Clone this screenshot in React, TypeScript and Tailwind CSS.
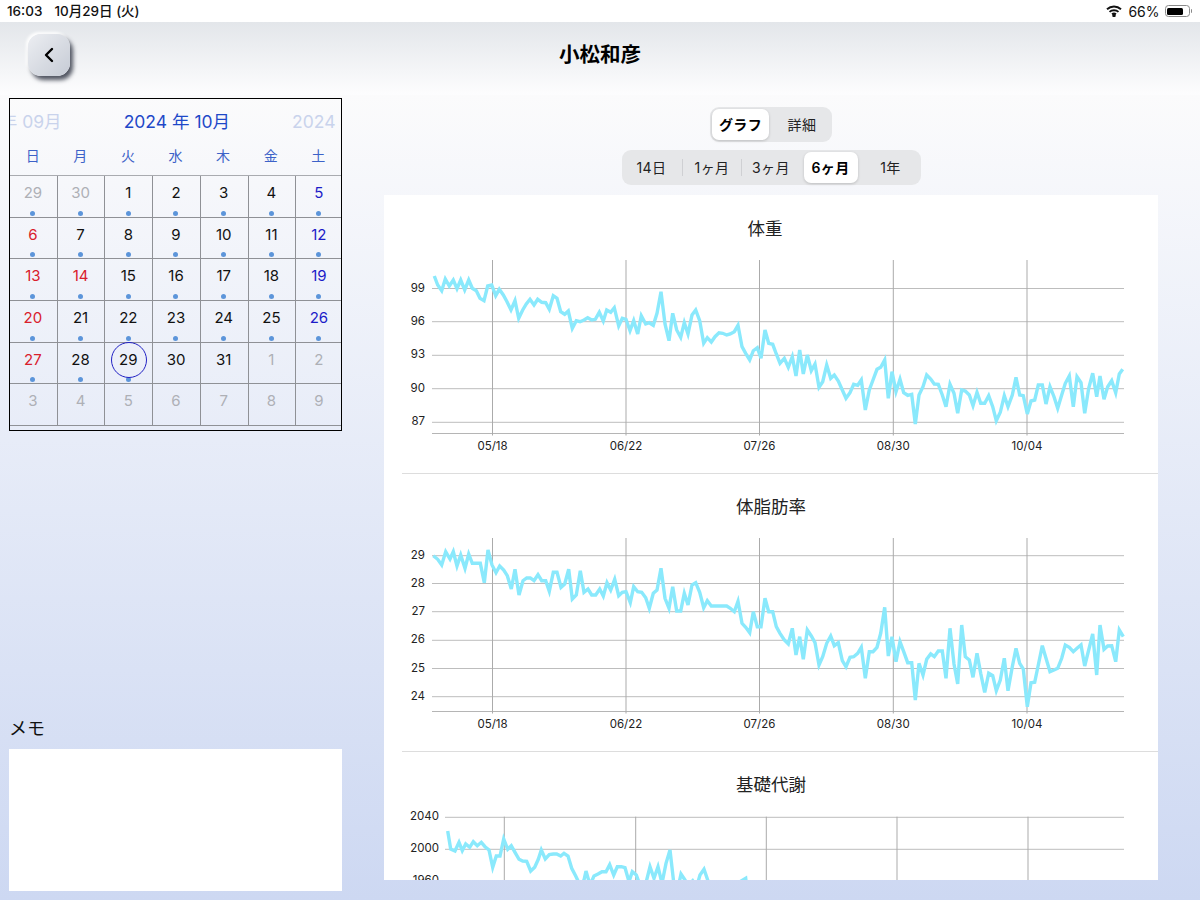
import { ChevronLeft } from 'lucide-react';

const FONT = 'font-["Inter","Noto_Sans_CJK_JP",sans-serif]';
const SVG_FONT = 'Inter, "Noto Sans CJK JP", sans-serif';

// line data, read off at 3x: [x, y] pairs relative to the crop origin
const weightA = [103,78,113,105,125,122,136,87,148,108,160,90,171,116,182,90,194,120,206,90,217,115,229,122,240,145,252,152,263,108,275,105,287,137,298,118,310,135,321,155,333,180,345,152,356,205,368,180,379,162,390,148,402,165,413,148,425,157,437,158,448,178,460,137,471,145,482,185,494,193,505,183,517,235,529,212,540,215,552,210,563,203,575,210,586,208,598,187,610,213,620,180,632,187,643,173,656,228,667,205,678,208,690,242,701,212,713,252,724,197,737,222,748,218,760,226,771,190,783,125,795,222,807,272,818,190,830,240,842,262,853,218,864,252,876,195,887,180,899,212,911,280,922,263,934,276,945,260,957,248,968,250,980,255,991,252,1003,245,1014,226,1026,290,1037,310,1049,330,1060,302,1072,293,1083,325,1095,240,1106,280,1118,283,1129,312];
const weightB = [0,340,13,325,25,352,37,320,48,378,59,300,70,372,82,315,94,362,105,342,117,412,128,395,140,345,152,385,163,375,175,393,187,420,198,445,210,428,221,403,233,406,244,390,256,480,268,420,279,390,291,358,302,352,314,330,325,445,336,365,348,425,360,388,371,428,383,436,395,433,406,522,417,435,429,410,440,375,452,387,463,402,475,403,487,435,498,470,510,403,522,430,533,490,545,420,556,423,568,435,579,467,591,427,602,460,614,460,626,437,638,470,649,512,661,487,673,437,684,470,697,435,708,382,719,435,730,437,742,492,753,453,764,450,775,405,787,405,798,462,810,410,822,440,833,475,845,435,856,400,868,378,880,470,891,380,903,398,914,490,926,415,938,370,950,440,960,378,972,448,983,410,995,392,1007,428,1018,372,1028,358];
const fatA = [100,77,113,88,125,105,137,65,150,87,160,65,171,108,182,75,195,115,206,72,217,100,229,100,241,100,253,158,264,60,276,105,288,128,299,108,311,120,322,137,334,177,345,118,357,195,369,152,380,144,391,144,402,152,414,134,425,152,437,152,448,184,460,127,471,127,483,172,494,162,506,118,517,207,529,195,541,122,552,187,564,177,575,195,587,195,599,177,610,198,621,158,632,180,644,148,656,197,667,187,678,185,691,218,701,170,713,185,725,187,737,203,748,235,760,190,771,180,783,115,795,205,807,235,818,170,830,243,842,243,853,190,864,225,876,165,887,158,899,187,911,233,922,212,934,228,945,228,957,228,968,228,980,228,991,235,1003,245,1014,214,1026,280,1037,292,1049,308,1060,245,1072,290,1083,290,1095,205,1106,245,1118,245,1129,290];
const fatB = [0,310,13,330,25,342,37,295,48,375,59,320,70,388,82,300,94,318,105,338,117,405,128,380,140,340,152,318,163,347,175,338,187,392,198,410,210,382,221,380,233,370,244,352,256,445,268,365,279,365,291,352,302,310,314,232,325,378,336,320,348,395,360,335,371,365,383,398,395,398,406,510,417,400,429,435,440,388,452,372,463,380,475,363,487,363,498,445,510,295,522,402,533,462,545,285,556,380,568,390,579,442,591,370,602,430,614,487,626,430,638,437,649,482,661,450,673,385,684,482,697,410,708,355,719,400,730,417,742,530,753,458,764,457,775,405,787,347,798,385,810,425,822,420,833,415,845,385,856,345,868,352,880,365,891,355,903,345,914,408,926,360,938,312,950,435,960,285,972,358,983,348,995,347,1007,395,1018,300,1030,320];
const metaA = [143,183,152,237,165,243,177,217,187,242,197,222,209,232,220,215,232,227,244,217,255,230,267,240,278,292,289,258,300,258,311,207,323,238,334,227,345,247,357,268,368,273,380,274,392,303,404,292,415,268,424,240,436,267,448,254,460,252,470,252,482,258,492,250,504,258,515,295,527,318,540,345,552,330,558,303,570,345,582,318,594,312,606,305,618,305,629,284,641,315,652,290,664,290,675,293,687,335,697,305,709,315,720,345,735,350,750,290,762,325,774,290,786,340,798,280,810,240,822,345,835,350,843,312,855,330,866,345,878,332,890,350,900,315,912,298,925,335,935,350,1020,335,1037,325,1040,350];

const toPage = (raw: number[], ox: number, oy: number) => {
  const out: string[] = [];
  for (let i = 0; i < raw.length; i += 2) {
    out.push(`${(ox + raw[i] / 3).toFixed(1)},${(oy + raw[i + 1] / 3).toFixed(1)}`);
  }
  return out;
};

const charts = [
  {
    title: '体重',
    titleClass: 'pr-[12px]',
    top: 195,
    left: 432,
    labelX: 425,
    gridY: [288.5, 321.7, 355.3, 388.7, 422.3],
    yLabels: ['99', '96', '93', '90', '87'],
    axisY: 433.5,
    vTop: 260,
    vX: [492.5, 626, 759.5, 893.3, 1027],
    xLabels: ['05/18', '06/22', '07/26', '08/30', '10/04'],
    points: [...toPage(weightA, 400, 250), ...toPage(weightB, 780, 250)],
  },
  {
    title: '体脂肪率',
    titleClass: '',
    top: 473,
    left: 432,
    labelX: 425,
    gridY: [555.7, 583.5, 611.7, 640.3, 668.5, 696.7],
    yLabels: ['29', '28', '27', '26', '25', '24'],
    axisY: 711.5,
    vTop: 538,
    vX: [492.5, 626, 759.5, 893.3, 1027],
    xLabels: ['05/18', '06/22', '07/26', '08/30', '10/04'],
    points: [...toPage(fatA, 400, 530), ...toPage(fatB, 780, 530)],
  },
  {
    title: '基礎代謝',
    titleClass: '',
    top: 751,
    left: 445,
    labelX: 439,
    gridY: [817.3, 849.3, 881.3],
    yLabels: ['2040', '2000', '1960'],
    axisY: 0,
    vTop: 816.7,
    vX: [504.3, 635.7, 766.3, 897, 1028],
    xLabels: [],
    points: toPage(metaA, 400, 770),
  },
];

type Tone = 'black' | 'red' | 'blue' | 'gray';
type Day = { n: number; tone: Tone; dot?: boolean };

const toneClass: Record<Tone, string> = {
  black: 'text-[#111]',
  red: 'text-[#d9202c]',
  blue: 'text-[#1c1cc8]',
  gray: 'text-[#aeb0b6]',
};

const weeks: Day[][] = [
  [{ n: 29, tone: 'gray', dot: true }, { n: 30, tone: 'gray', dot: true }, { n: 1, tone: 'black', dot: true }, { n: 2, tone: 'black', dot: true }, { n: 3, tone: 'black', dot: true }, { n: 4, tone: 'black', dot: true }, { n: 5, tone: 'blue', dot: true }],
  [{ n: 6, tone: 'red', dot: true }, { n: 7, tone: 'black', dot: true }, { n: 8, tone: 'black', dot: true }, { n: 9, tone: 'black', dot: true }, { n: 10, tone: 'black', dot: true }, { n: 11, tone: 'black', dot: true }, { n: 12, tone: 'blue', dot: true }],
  [{ n: 13, tone: 'red', dot: true }, { n: 14, tone: 'red', dot: true }, { n: 15, tone: 'black', dot: true }, { n: 16, tone: 'black', dot: true }, { n: 17, tone: 'black', dot: true }, { n: 18, tone: 'black', dot: true }, { n: 19, tone: 'blue', dot: true }],
  [{ n: 20, tone: 'red', dot: true }, { n: 21, tone: 'black', dot: true }, { n: 22, tone: 'black', dot: true }, { n: 23, tone: 'black', dot: true }, { n: 24, tone: 'black', dot: true }, { n: 25, tone: 'black', dot: true }, { n: 26, tone: 'blue', dot: true }],
  [{ n: 27, tone: 'red', dot: true }, { n: 28, tone: 'black', dot: true }, { n: 29, tone: 'black', dot: true }, { n: 30, tone: 'black' }, { n: 31, tone: 'black' }, { n: 1, tone: 'gray' }, { n: 2, tone: 'gray' }],
  [{ n: 3, tone: 'gray' }, { n: 4, tone: 'gray' }, { n: 5, tone: 'gray' }, { n: 6, tone: 'gray' }, { n: 7, tone: 'gray' }, { n: 8, tone: 'gray' }, { n: 9, tone: 'gray' }],
];

function StatusBar() {
  return (
    <div className="h-[22px] bg-white flex items-center justify-between pl-[7px] pr-[8px] text-[13.5px] font-medium text-[#111]">
      <div className="flex gap-[12px]">
        <span>16:03</span>
        <span>10月29日 (火)</span>
      </div>
      <div className="flex items-center gap-[5px]">
        <svg width="16" height="12" viewBox="0 0 16 12" fill="none" stroke="#111" strokeWidth="1.9">
          <path d="M1 4.3 C5 .6 11 .6 15 4.3" />
          <path d="M3.5 6.9 C6 4.7 10 4.7 12.5 6.9" />
          <path d="M6 9.3 C7.2 8.4 8.8 8.4 10 9.3" />
          <circle cx="8" cy="10.6" r="0.8" fill="#111" />
        </svg>
        <span className="text-[14px] font-normal pl-[1px]">66%</span>
        <div className="flex items-center">
          <div className="w-[25px] h-[12px] rounded-[3.5px] border border-[#8a8a8a] p-[1.5px]">
            <div className="h-full w-[16px] rounded-[1.5px] bg-black" />
          </div>
          <div className="w-[1.5px] h-[4px] rounded-r-sm bg-[#8a8a8a] ml-[1px]" />
        </div>
      </div>
    </div>
  );
}

function Header() {
  return (
    <div className="h-[73px] pb-[7px] bg-gradient-to-b from-[#e3e6ea] to-[#fdfdfe] flex items-center relative">
      <button className="ml-[28px] w-[42px] h-[42px] rounded-[13px] bg-gradient-to-br from-[#eceef2] to-[#c6cbd5] shadow-[3px_4px_4px_rgba(40,45,60,0.8),-2px_-2px_3px_rgba(255,255,255,0.95)] flex items-center justify-center text-black">
        <ChevronLeft size={24} strokeWidth={2.4} />
      </button>
      <h1 className="absolute inset-x-0 text-center text-[20.5px] font-bold text-black pointer-events-none">小松和彦</h1>
    </div>
  );
}

function Calendar() {
  return (
    <div className="h-[333px] border border-black overflow-hidden">
      <div className="h-[46px] pr-[5px] flex items-center justify-center gap-[62px] text-[17.5px] whitespace-nowrap">
        <span className="shrink-0 text-[#c9d3ec]">2024 年 09月</span>
        <span className="shrink-0 text-[#1e48c8]">2024 年 10月</span>
        <span className="shrink-0 text-[#c9d3ec]">2024 年 11月</span>
      </div>
      <div className="grid grid-cols-7 w-[333px] -ml-[1px] h-[30px] pb-[10px] items-center text-[14px] text-center text-[#3d62c8]">
        {['日', '月', '火', '水', '木', '金', '土'].map((w) => (
          <span key={w}>{w}</span>
        ))}
      </div>
      <div className="border-t border-[#a9abb0] w-[334px]">
        {weeks.map((week, i) => (
          <div key={i} className="grid grid-cols-7 h-[41.67px] border-b border-[#8f9196]">
            {week.map((d, j) => (
              <div key={j} className={`relative flex justify-center pt-[6px] text-[15px] leading-[22px] ${j < 6 ? 'border-r border-[#8f9196] pr-[1px]' : 'pr-[2.5px]'} ${toneClass[d.tone]}`}>
                {d.n}
                {d.dot && <span className={`absolute bottom-[1px] w-[5px] h-[5px] rounded-full bg-[#5c95da] ${j < 6 ? 'left-[calc(50%-3px)]' : 'left-[calc(50%-3.7px)]'}`} />}
                {i === 4 && j === 2 && <span className="absolute -top-[1px] left-1/2 -ml-[18px] w-[36px] h-[36px] rounded-full border border-[#2222c4]" />}
              </div>
            ))}
          </div>
        ))}
      </div>
    </div>
  );
}

type Segment = { label: string; nudge?: string };

function Segments({ items, active, pill }: { items: Segment[]; active: number; pill: string }) {
  return (
    <div className="flex h-[35px] rounded-[9px] bg-[#e6e7e9] p-[2px] text-[14px] tracking-[0.4px] text-[#222]">
      {items.map((s, i) => (
        <div key={s.label} className="relative w-[59px] flex items-center justify-center">
          {i === active ? (
            <span className={`h-full flex items-center justify-center rounded-[7px] bg-white font-semibold text-black shadow-[0_1px_3px_rgba(0,0,0,0.18)] ${pill}`}>{s.label}</span>
          ) : (
            <span className={s.nudge}>{s.label}</span>
          )}
          {i < items.length - 1 && i !== active && i + 1 !== active && (
            <span className="absolute right-0 top-[7px] bottom-[7px] w-px bg-[#cfd0d3]" />
          )}
        </div>
      ))}
    </div>
  );
}

function Chart({ c }: { c: (typeof charts)[number] }) {
  const svgTop = c.top + 64;
  const svgHeight = 213;
  const vBottom = c.axisY ? c.axisY + 2 : svgTop + svgHeight;
  return (
    <div className="relative h-[278px]">
      <h2 className={`h-[64px] pt-[20px] text-center text-[17.5px] leading-[28px] text-[#222] ${c.titleClass}`}>{c.title}</h2>
      <svg width="774" height={svgHeight} viewBox={`384 ${svgTop} 774 ${svgHeight}`} className="block overflow-visible">
        {c.gridY.map((y, i) => (
          <g key={y}>
            <line x1={c.left} x2="1124" y1={y} y2={y} stroke="#bdbdbd" strokeWidth="1" />
            <text x={c.labelX} y={y + 3} textAnchor="end" fontSize="11.5" fill="#222" fontFamily={SVG_FONT}>{c.yLabels[i]}</text>
          </g>
        ))}
        {c.axisY > 0 && <line x1={c.left} x2="1124" y1={c.axisY} y2={c.axisY} stroke="#b5b5b5" strokeWidth="1.2" />}
        {c.vX.map((x, i) => (
          <g key={x}>
            <line x1={x} x2={x} y1={c.vTop} y2={vBottom} stroke="#ababab" strokeWidth="1" />
            {c.xLabels[i] && (
              <text x={x} y={c.axisY + 16} textAnchor="middle" fontSize="11.5" fill="#222" fontFamily={SVG_FONT}>{c.xLabels[i]}</text>
            )}
          </g>
        ))}
        <polyline points={c.points.join(' ')} fill="none" stroke="#8ae9fc" strokeWidth="3.4" strokeLinejoin="miter" />
      </svg>
      <div className="absolute left-[18px] right-0 -bottom-px h-px bg-[#dddddd]" />
    </div>
  );
}

export default function App() {
  return (
    <div className={`${FONT} w-[1200px] h-[900px] overflow-hidden flex flex-col`}>
      <StatusBar />
      <Header />
      <div className="flex-1 min-h-0 flex bg-gradient-to-b from-[#fbfbfc] to-[#cdd8f2]">
        <aside className="w-[333px] ml-[9px] pt-[3px] pb-[9px] flex flex-col">
          <Calendar />
          <div className="mt-auto">
            <div className="text-[18px] leading-[26px] pb-[7px] text-[#111]">メモ</div>
            <div className="h-[142px] bg-white" />
          </div>
        </aside>
        <main className="ml-[42px] w-[774px] pt-[12px] flex flex-col items-center">
          <Segments items={[{ label: 'グラフ' }, { label: '詳細', nudge: 'pl-[3px]' }]} active={0} pill="w-[57px] -ml-[2px]" />
          <div className="h-[8px]" />
          <Segments
            items={[{ label: '14日', nudge: 'pr-[3px]' }, { label: '1ヶ月' }, { label: '3ヶ月' }, { label: '6ヶ月' }, { label: '1年', nudge: 'pl-[3px]' }]}
            active={3}
            pill="w-[54px] ml-[1px]"
          />
          <div className="mt-[10px] w-full h-[685px] bg-white overflow-hidden">
            {charts.map((c) => (
              <Chart key={c.title} c={c} />
            ))}
          </div>
        </main>
      </div>
    </div>
  );
}
